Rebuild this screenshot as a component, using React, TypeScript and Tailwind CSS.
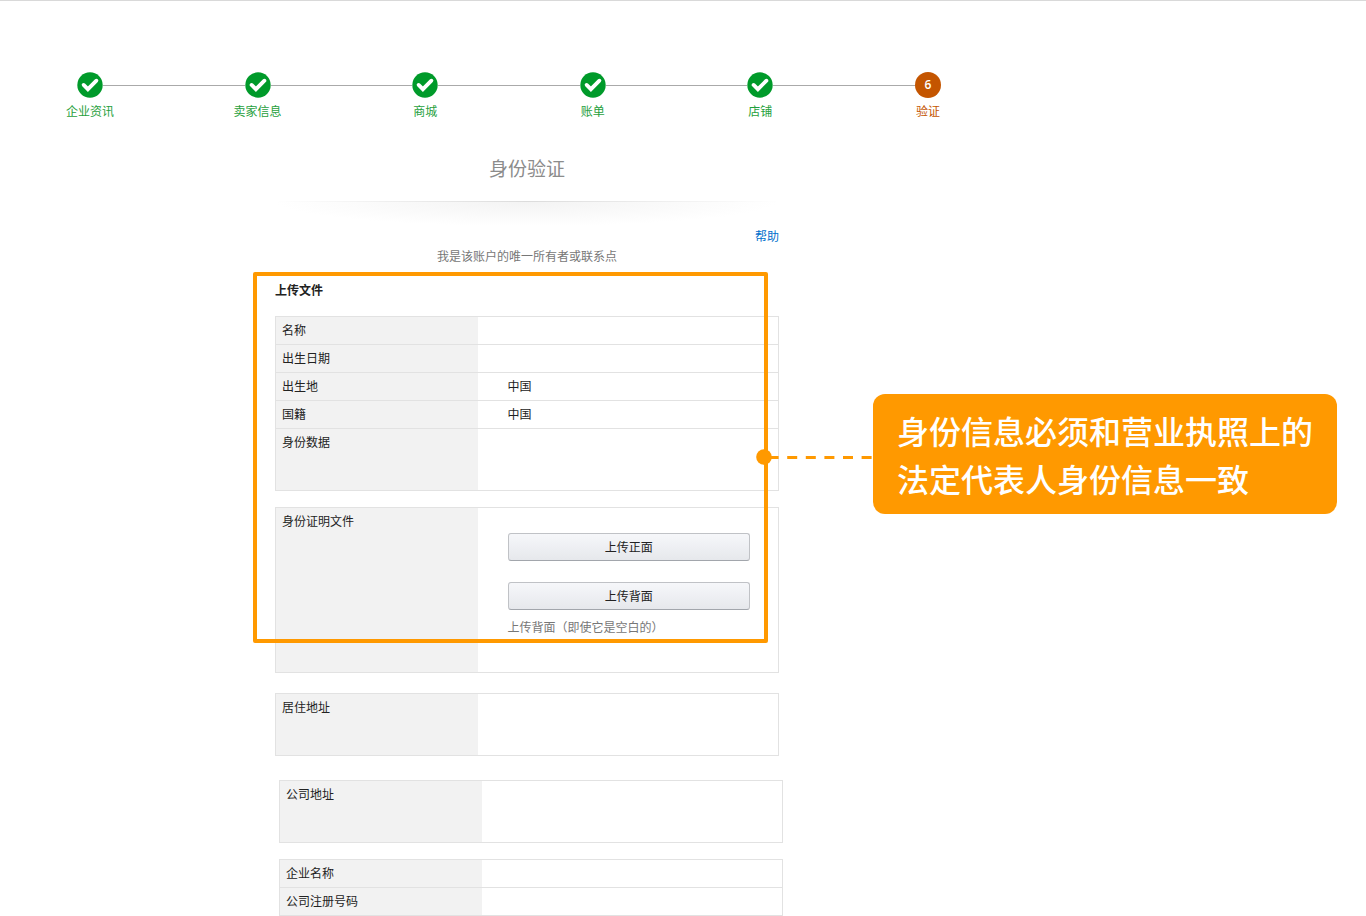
import type { ReactNode } from "react";

const steps = [
  { label: "企业资讯", done: true },
  { label: "卖家信息", done: true },
  { label: "商城", done: true },
  { label: "账单", done: true },
  { label: "店铺", done: true },
  { label: "验证", done: false },
];

type Row = {
  label: string;
  value?: ReactNode;
  size?: "md" | "lg";
};

const rowHeights = {
  sm: "h-7",
  md: "h-[62px]",
  lg: "h-[165px]",
};

function CheckIcon() {
  return (
    <svg viewBox="0 0 26 26" className="w-[26px] h-[26px]" aria-hidden="true">
      <circle cx="13" cy="13" r="12.7" fill="#009a2a" />
      <path
        d="M6.6 12.9 L10.9 17.2 L19.4 8.7"
        fill="none"
        stroke="#fff"
        strokeWidth="3.8"
        strokeLinecap="round"
        strokeLinejoin="miter"
      />
    </svg>
  );
}

function Stepper() {
  return (
    <ol className="flex ml-[66px] mr-[102px] text-xs">
      {steps.map((step, i) => (
        <li key={step.label} className={i < steps.length - 1 ? "flex flex-1 items-start" : "flex flex-none items-start"}>
          <div className="flex w-12 flex-none flex-col items-center">
            {step.done ? (
              <CheckIcon />
            ) : (
              <span className="flex w-[26px] h-[26px] items-center justify-center rounded-full bg-[#c45500] font-['Open_Sans',sans-serif] font-semibold text-white">
                {i + 1}
              </span>
            )}
            <span
              className={
                step.done
                  ? "mt-[5px] leading-4 whitespace-nowrap text-[#1fa03c]"
                  : "mt-[5px] leading-4 whitespace-nowrap text-[#c45500]"
              }
            >
              {step.label}
            </span>
          </div>
          {i < steps.length - 1 && <div className="mt-[13px] -mx-[11px] h-px flex-1 bg-[#aaa]" />}
        </li>
      ))}
    </ol>
  );
}

function InfoTable({ rows }: { rows: Row[] }) {
  return (
    <table className="w-full table-fixed border-collapse border border-[#e2e2e2] text-left text-xs leading-4">
      <tbody>
        {rows.map((row) => (
          <tr key={row.label} className={rowHeights[row.size ?? "sm"]}>
            <th scope="row" className="w-[202px] border-y border-[#e2e2e2] bg-[#f2f2f2] px-[6px] py-[5px] align-top font-normal">
              {row.label}
            </th>
            <td className="border-y border-[#e2e2e2] pl-[30px] pr-7 py-[5px] align-top">{row.value}</td>
          </tr>
        ))}
      </tbody>
    </table>
  );
}

function UploadButton({ children }: { children: ReactNode }) {
  return (
    <button
      type="button"
      className="h-7 w-full rounded-[3px] border border-[#c0c2c6] border-b-[#a2a6ac] bg-linear-to-b from-[#f6f7fa] to-[#e6e8ec] text-center text-xs"
    >
      {children}
    </button>
  );
}

function UploadFields() {
  return (
    <div className="pt-5">
      <UploadButton>上传正面</UploadButton>
      <div className="mt-[21px]">
        <UploadButton>上传背面</UploadButton>
      </div>
      <p className="mt-[9px] text-[#777]">上传背面（即使它是空白的）</p>
    </div>
  );
}

function Callout() {
  return (
    <>
      <div className="pointer-events-none absolute -top-2 right-[11px] bottom-[30px] -left-[22px] rounded-xs border-4 border-[#ff9900]" />
      <svg className="absolute top-[169px] left-[481px] h-4 w-[117px]" viewBox="0 0 117 16" aria-hidden="true">
        <circle cx="8" cy="8" r="7.8" fill="#ff9900" />
        <line x1="12.6" y1="8.5" x2="117" y2="8.5" stroke="#ff9900" strokeWidth="3" strokeDasharray="10 8.6" />
      </svg>
      <p className="absolute top-[114px] left-[598px] rounded-xl bg-[#ff9900] px-6 py-3 text-[32px] leading-[48px] font-medium whitespace-nowrap text-white">
        身份信息必须和营业执照上的
        <br />
        法定代表人身份信息一致
      </p>
    </>
  );
}

export default function App() {
  return (
    <div className="overflow-hidden border-t border-[#d9d9d9] bg-white pt-[71px] font-['Noto_Sans_CJK_SC',sans-serif] text-[#222]">
      <main className="max-w-[1054px]">
        <Stepper />

        <h1 className="mt-[31px] text-center text-[19px] leading-9 text-[#8c8c8c]">身份验证</h1>

        <div className="mx-auto w-[504px]">
          <div className="mt-[15px] h-[25px] bg-[radial-gradient(ellipse_50%_100%_at_top,#f3f3f3,#ffffff)]">
            <div className="h-px bg-linear-to-r from-white via-[#dcdcdc] to-white" />
          </div>

          <div className="text-right text-xs leading-5">
            <a href="#help" className="text-[#0070cc]">帮助</a>
          </div>
          <p className="text-center text-xs leading-5 text-[#777]">我是该账户的唯一所有者或联系点</p>

          <section className="relative mt-[14px]">
            <h2 className="mb-4 text-xs leading-5 font-bold">上传文件</h2>
            <InfoTable
              rows={[
                { label: "名称" },
                { label: "出生日期" },
                { label: "出生地", value: "中国" },
                { label: "国籍", value: "中国" },
                { label: "身份数据", size: "md" },
              ]}
            />
            <div className="mt-4">
              <InfoTable rows={[{ label: "身份证明文件", value: <UploadFields />, size: "lg" }]} />
            </div>
            <Callout />
          </section>

          <section className="mt-5">
            <InfoTable rows={[{ label: "居住地址", size: "md" }]} />
          </section>

          <section className="mt-6 ml-1 -mr-1 space-y-4">
            <InfoTable rows={[{ label: "公司地址", size: "md" }]} />
            <InfoTable rows={[{ label: "企业名称" }, { label: "公司注册号码" }]} />
          </section>
        </div>
      </main>
    </div>
  );
}
